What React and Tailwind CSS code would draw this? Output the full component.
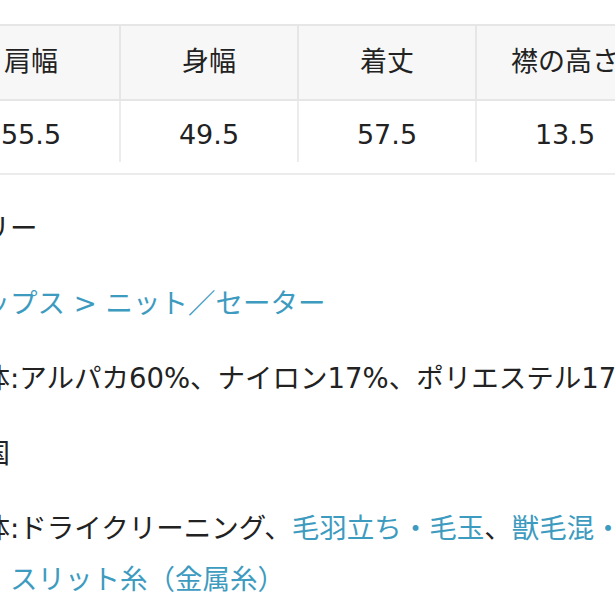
import React from 'react';

const font = { fontFamily: '"DejaVu Sans", "Noto Sans CJK JP", sans-serif' };

export default function App() {
  const heads = ['裄丈', '肩幅', '身幅', '着丈', '襟の高さ'];
  const vals = ['80.0', '55.5', '49.5', '57.5', '13.5'];

  return (
    <div
      className="w-[615px] h-[615px] overflow-hidden bg-white text-[27px] text-[#222]"
      style={font}
    >
      {/* サイズ表 */}
      <div className="mt-[24px] ml-[-237px] w-[900px]">
        <div className="flex border-t-2 border-[#e6e6e6] bg-[#f7f7f7]">
          {heads.map((h, i) => (
            <div
              key={h}
              className={`w-[178px] h-[73px] shrink-0 flex items-center justify-center whitespace-nowrap ${
                i > 0 ? 'border-l-2 border-[#e6e6e6]' : ''
              }`}
            >
              {h}
            </div>
          ))}
        </div>
        <div className="flex border-t-2 border-[#e6e6e6]">
          {vals.map((v, i) => (
            <div
              key={i}
              className={`w-[178px] h-[61px] shrink-0 flex items-center justify-center pt-[8px] ${
                i > 0 ? 'border-l-2 border-[#ececec]' : ''
              }`}
            >
              {v}
            </div>
          ))}
        </div>
        <div className="mt-[11px] border-t-2 border-[#ececec]"></div>
      </div>

      {/* 商品情報 */}
      <div className="mt-[28px] ml-[-45px] text-[27.5px] leading-[51px] whitespace-nowrap">
        <div className="mb-[24px]">ベリー</div>
        <div className="mb-[24px] text-[#3d9bc0]">トップス &gt; ニット／セーター</div>
        <div className="mb-[24px]">本体:アルパカ60%、ナイロン17%、ポリエステル17%</div>
        <div className="mb-[24px]">中国</div>
        <div>
          本体:ドライクリーニング、
          <span className="text-[#3d9bc0]">毛羽立ち・毛玉</span>、
          <span className="text-[#3d9bc0]">獣毛混・ラメ</span>
        </div>
        <div className="pl-[55px] text-[#3d9bc0]">スリット糸（金属糸）</div>
      </div>
    </div>
  );
}
